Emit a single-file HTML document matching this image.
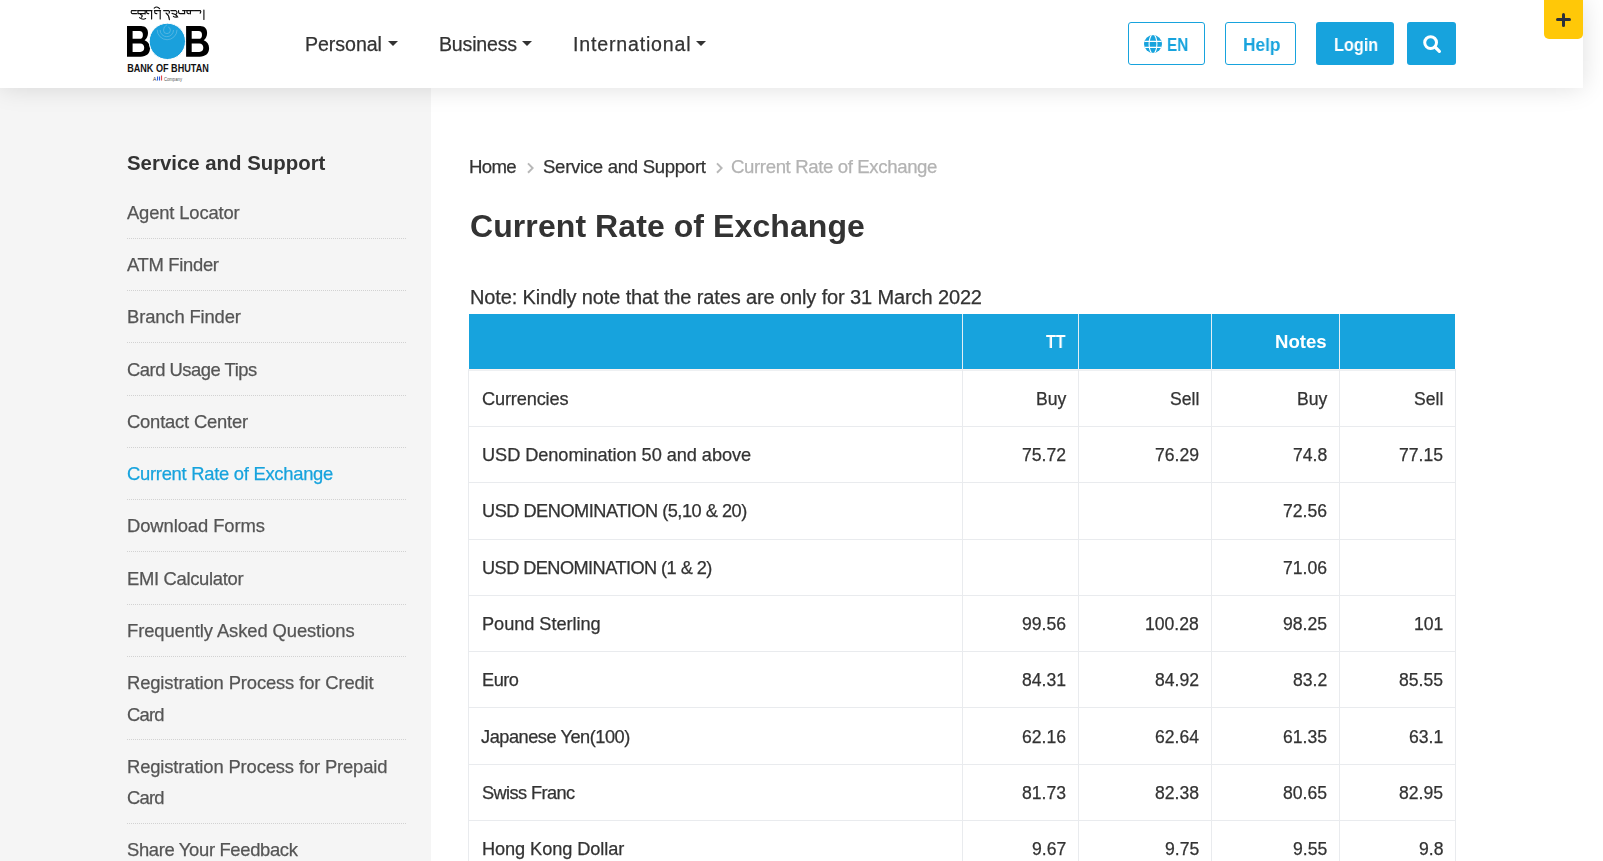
<!DOCTYPE html>
<html><head><meta charset="utf-8"><title>Current Rate of Exchange</title>
<style>
html,body{margin:0;padding:0;}
body{width:1603px;height:861px;overflow:hidden;position:relative;background:#fff;font-family:"Liberation Sans",sans-serif;}
.t{margin:0;will-change:transform;}
.r{-webkit-text-stroke:0.25px currentColor;}
.bm{display:inline-block;width:0;height:0;vertical-align:baseline;}
#sidebar{position:absolute;left:0;top:88px;width:431px;height:773px;background:#f5f5f5;}
#header{position:absolute;left:0;top:0;width:1583px;height:88px;background:#fff;box-shadow:0 0 24px rgba(0,0,0,0.13);z-index:5;}
.logo{position:absolute;left:120px;top:0;}
.caret{position:absolute;top:41px;width:0;height:0;border-top:5.5px solid #333;border-left:5px solid transparent;border-right:5px solid transparent;}
.btn{position:absolute;top:22px;height:43px;box-sizing:border-box;border-radius:3px;}
.ob{border:1px solid #17a3dd;background:#fff;}
.fb{background:#17a3dd;}
#plus{position:absolute;left:1544px;top:0;width:39px;height:39px;background:#ffc808;border-radius:0 0 5px 5px;z-index:6;}
#plus:before{content:"";position:absolute;left:12px;top:18.2px;width:14.5px;height:3.3px;background:#2b303b;border-radius:1.6px;}
#plus:after{content:"";position:absolute;left:17.6px;top:13px;width:3.3px;height:14px;background:#2b303b;border-radius:1.6px;}
.sep{position:absolute;left:127px;width:279px;height:0;border-top:1px dotted #d2d2d2;}
#thead{position:absolute;left:469px;top:314px;width:986px;height:55px;background:#17a3dd;}
#thb{position:absolute;left:469px;top:369px;width:986px;height:2px;background:linear-gradient(#fcf3f0 50%,#eef0f2 50%);}
.hl{position:absolute;left:468px;width:988px;height:1px;background:#e9ebee;}
.vl{position:absolute;top:369px;width:1px;height:492px;background:#e9ebee;}
.vlh{position:absolute;top:314px;width:1px;height:55px;background:#e3eef4;}
</style></head>
<body>
<div id="header">
<svg class="logo" width="100" height="88" viewBox="120 0 100 88">
<path d="M131.3 11 Q130.8 14.2 133.3 13.6 H136.6 M131.6 10.6 H136.4 M137.6 10.6 H145.6 M138 10.8 V13.6 H145 M145.2 10.6 V14 M140.5 14.5 Q143.5 15.5 141.5 17.2 M139.5 17.6 Q142.5 20.2 145.6 18.6 M146.3 10.6 H152 M146.6 10.8 Q146.2 14 148.8 13.6 M151.6 10.6 V19 M154.4 10.6 H160.6 M154.7 10.8 Q154.3 14 156.9 13.6 M160.2 10.6 V19 M154.2 8.2 Q156.8 5.6 159.6 8.6 M163.6 10.6 H168.4 Q170.2 11.2 169 13.2 M166 13 Q169 15 169.4 19.6 M170.8 10.6 H175.6 Q178 12 176.2 14 M172 13.4 Q176.4 14.4 177.6 17 Q174.5 17.4 173.4 16.4 M178.6 10.6 Q178.2 14.2 180.8 13.6 H184.6 V11 M182.6 10.6 H185.4 M186.4 10.6 H193.6 M187 11 Q186.6 14 189.2 13.6 M190.4 10.6 V13.8 M194.4 10.6 H200.4 Q201.4 11.6 200.2 13.2 M203.9 10 V19.4" fill="none" stroke="#111" stroke-width="1.15" stroke-linecap="round"/>
<path fill="#000" fill-rule="evenodd" d="M127.00 26.10 H141.00 C145.60 26.10 148.00 28.90 148.00 33.00 C148.00 36.30 146.60 38.70 144.60 40.30 C148.00 41.50 150.00 44.40 150.00 48.30 C150.00 53.50 146.40 56.70 140.60 56.70 H127.00 Z M132.60 31.00 H139.40 C141.80 31.00 142.90 32.50 142.90 34.90 C142.90 37.40 141.80 38.80 139.40 38.80 H132.60 Z M132.60 43.60 H140.20 C142.90 43.60 144.20 45.30 144.20 47.80 C144.20 50.30 142.90 51.90 140.20 51.90 H132.60 Z"/>
<path fill="#000" fill-rule="evenodd" d="M186.10 26.10 H200.10 C204.70 26.10 207.10 28.90 207.10 33.00 C207.10 36.30 205.70 38.70 203.70 40.30 C207.10 41.50 209.10 44.40 209.10 48.30 C209.10 53.50 205.50 56.70 199.70 56.70 H186.10 Z M191.70 31.00 H198.50 C200.90 31.00 202.00 32.50 202.00 34.90 C202.00 37.40 200.90 38.80 198.50 38.80 H191.70 Z M191.70 43.60 H199.30 C202.00 43.60 203.30 45.30 203.30 47.80 C203.30 50.30 202.00 51.90 199.30 51.90 H191.70 Z"/>
<circle cx="167.35" cy="41.35" r="18.15" fill="#1aa0dc" stroke="#fff" stroke-width="1"/>
<g fill="none" stroke="#7fc4e6" stroke-width="0.55">
<path d="M157.2 29.8 a9.9 9.9 0 0 0 19.8 0"/><path d="M160.1 30 a6.7 6.7 0 0 0 13.4 0"/><path d="M167.2 24.6 Q163.4 26.5 163.5 30.2 a3.45 3.45 0 0 0 6.9 0 Q170.4 27.8 168.2 27"/>
</g>
<g transform="translate(0 71.6) scale(1 1.2) translate(0 -71.6)"><text x="127.2" y="71.6" font-family="Liberation Sans" font-weight="700" font-size="9.2" textLength="81.6" lengthAdjust="spacingAndGlyphs" fill="#111">BANK OF BHUTAN</text></g>
<text x="153" y="80.5" font-family="Liberation Sans" font-size="5" fill="#333">A</text>
<rect x="157" y="76.5" width="1.1" height="4" fill="#2a5bd7"/><rect x="159" y="76.5" width="1.1" height="4" fill="#2a5bd7"/><rect x="161" y="75.5" width="1.1" height="5" fill="#e04a4a"/>
<text x="164" y="80.5" font-family="Liberation Sans" font-size="4.6" fill="#555" textLength="18" lengthAdjust="spacingAndGlyphs">Company</text>
</svg>
<div class="caret" style="left:388px"></div>
<div class="caret" style="left:522px"></div>
<div class="caret" style="left:696px"></div>
<div class="btn ob" style="left:1128px;width:77px"></div>
<div class="btn ob" style="left:1225px;width:71px"></div>
<div class="btn fb" style="left:1316px;width:78px"></div>
<div class="btn fb" style="left:1407px;width:49px"></div>
<svg style="position:absolute;left:1144px;top:35px" width="18" height="18" viewBox="0 0 18 18"><defs><clipPath id="gc"><circle cx="9" cy="9" r="9"/></clipPath></defs>
<circle cx="9" cy="9" r="9" fill="#17a3dd"/>
<g clip-path="url(#gc)" stroke="#fff" stroke-width="1.1" fill="none">
<ellipse cx="9" cy="9" rx="3.9" ry="9.6"/><path d="M0 6.35 H18 M0 12.35 H18"/>
</g></svg>
<svg style="position:absolute;left:1422.5px;top:35px" width="19" height="19" viewBox="0 0 19 19">
<circle cx="7.6" cy="7.6" r="5.9" fill="none" stroke="#fff" stroke-width="3"/>
<path d="M12 12 L16.4 16.4" stroke="#fff" stroke-width="3.2" stroke-linecap="round"/></svg>
<div class="t r" id="nav1" style="position:absolute;left:305.10px;top:30.80px;font-size:19.6px;line-height:26px;white-space:nowrap;color:#333;letter-spacing:-0.052px;">Personal</div>
<div class="t r" id="nav2" style="position:absolute;left:438.70px;top:30.80px;font-size:19.6px;line-height:26px;white-space:nowrap;color:#333;letter-spacing:-0.205px;">Business</div>
<div class="t r" id="nav3" style="position:absolute;left:572.90px;top:30.80px;font-size:19.6px;line-height:26px;white-space:nowrap;color:#333;letter-spacing:0.810px;">International</div>
<div class="t" id="en" style="position:absolute;left:1167.40px;transform:scaleX(0.8334);transform-origin:0 0;top:32.61px;font-size:18.4px;line-height:24px;white-space:nowrap;color:#17a3dd;font-weight:700;">EN</div>
<div class="t" id="help" style="position:absolute;left:1242.70px;transform:scaleX(0.9405);transform-origin:0 0;top:32.61px;font-size:18.4px;line-height:24px;white-space:nowrap;color:#17a3dd;font-weight:700;">Help</div>
<div class="t" id="login" style="position:absolute;left:1333.70px;transform:scaleX(0.8828);transform-origin:0 0;top:32.70px;font-size:18.4px;line-height:24px;white-space:nowrap;color:#fff;font-weight:700;">Login</div>
</div>
<div id="plus"></div>
<div id="sidebar"></div>
<div class="sep" style="top:238px"></div>
<div class="sep" style="top:290px"></div>
<div class="sep" style="top:342px"></div>
<div class="sep" style="top:395px"></div>
<div class="sep" style="top:447px"></div>
<div class="sep" style="top:499px"></div>
<div class="sep" style="top:551px"></div>
<div class="sep" style="top:604px"></div>
<div class="sep" style="top:656px"></div>
<div class="sep" style="top:739px"></div>
<div class="sep" style="top:823px"></div>
<svg style="position:absolute;left:526px;top:162px" width="8" height="12" viewBox="0 0 8 12"><path d="M2 1.4 L6.6 6.1 L2 10.8" fill="none" stroke="#b8b8b8" stroke-width="2"/></svg>
<svg style="position:absolute;left:714.5px;top:162px" width="8" height="12" viewBox="0 0 8 12"><path d="M2 1.4 L6.6 6.1 L2 10.8" fill="none" stroke="#b8b8b8" stroke-width="2"/></svg>
<div id="thead"></div>
<div id="thb"></div>
<div class="vl" style="left:468px"></div>
<div class="vl" style="left:1455px"></div>
<div class="vl" style="left:962px"></div><div class="vlh" style="left:962px"></div>
<div class="vl" style="left:1078px"></div><div class="vlh" style="left:1078px"></div>
<div class="vl" style="left:1211px"></div><div class="vlh" style="left:1211px"></div>
<div class="vl" style="left:1339px"></div><div class="vlh" style="left:1339px"></div>
<div class="hl" style="top:426px"></div>
<div class="hl" style="top:482px"></div>
<div class="hl" style="top:539px"></div>
<div class="hl" style="top:595px"></div>
<div class="hl" style="top:651px"></div>
<div class="hl" style="top:707px"></div>
<div class="hl" style="top:764px"></div>
<div class="hl" style="top:820px"></div>
<div class="hl" style="top:876px"></div>
<div class="t" id="sbt" style="position:absolute;left:127.10px;top:149.91px;font-size:20.4px;line-height:27px;white-space:nowrap;color:#333;font-weight:700;letter-spacing:0.006px;">Service and Support</div>
<div class="t r" id="sb0" style="position:absolute;left:127.00px;top:200.86px;font-size:18.4px;line-height:24px;white-space:nowrap;color:#555;letter-spacing:-0.148px;">Agent Locator</div>
<div class="t r" id="sb1" style="position:absolute;left:127.00px;top:253.11px;font-size:18.4px;line-height:24px;white-space:nowrap;color:#555;letter-spacing:-0.305px;">ATM Finder</div>
<div class="t r" id="sb2" style="position:absolute;left:127.00px;top:305.36px;font-size:18.4px;line-height:24px;white-space:nowrap;color:#555;letter-spacing:-0.131px;">Branch Finder</div>
<div class="t r" id="sb3" style="position:absolute;left:127.00px;top:357.59px;font-size:18.4px;line-height:24px;white-space:nowrap;color:#555;letter-spacing:-0.482px;">Card Usage Tips</div>
<div class="t r" id="sb4" style="position:absolute;left:127.00px;top:409.83px;font-size:18.4px;line-height:24px;white-space:nowrap;color:#555;letter-spacing:-0.197px;">Contact Center</div>
<div class="t r" id="sb5" style="position:absolute;left:127.00px;top:462.08px;font-size:18.4px;line-height:24px;white-space:nowrap;color:#17a3dd;letter-spacing:-0.276px;">Current Rate of Exchange</div>
<div class="t r" id="sb6" style="position:absolute;left:127.00px;top:514.31px;font-size:18.4px;line-height:24px;white-space:nowrap;color:#555;letter-spacing:-0.082px;">Download Forms</div>
<div class="t r" id="sb7" style="position:absolute;left:127.00px;top:566.55px;font-size:18.4px;line-height:24px;white-space:nowrap;color:#555;letter-spacing:-0.313px;">EMI Calculator</div>
<div class="t r" id="sb8" style="position:absolute;left:127.00px;top:618.78px;font-size:18.4px;line-height:24px;white-space:nowrap;color:#555;letter-spacing:-0.097px;">Frequently Asked Questions</div>
<div class="t r" id="sb9a" style="position:absolute;left:127.00px;top:671.01px;font-size:18.4px;line-height:24px;white-space:nowrap;color:#555;letter-spacing:-0.124px;">Registration Process for Credit</div>
<div class="t r" id="sb9b" style="position:absolute;left:127.00px;top:702.91px;font-size:18.4px;line-height:24px;white-space:nowrap;color:#555;letter-spacing:-0.764px;">Card</div>
<div class="t r" id="sb10a" style="position:absolute;left:127.00px;top:755.00px;font-size:18.4px;line-height:24px;white-space:nowrap;color:#555;letter-spacing:-0.138px;">Registration Process for Prepaid</div>
<div class="t r" id="sb10b" style="position:absolute;left:127.00px;top:785.91px;font-size:18.4px;line-height:24px;white-space:nowrap;color:#555;letter-spacing:-0.764px;">Card</div>
<div class="t r" id="sb11" style="position:absolute;left:127.00px;top:837.83px;font-size:18.4px;line-height:24px;white-space:nowrap;color:#555;letter-spacing:-0.334px;">Share Your Feedback</div>
<div class="t r" id="bc1" style="position:absolute;left:469.40px;top:154.11px;font-size:18.6px;line-height:25px;white-space:nowrap;color:#333;letter-spacing:-0.642px;">Home</div>
<div class="t r" id="bc2" style="position:absolute;left:542.70px;top:154.11px;font-size:18.6px;line-height:25px;white-space:nowrap;color:#333;letter-spacing:-0.307px;">Service and Support</div>
<div class="t r" id="bc3" style="position:absolute;left:731.10px;top:154.11px;font-size:18.6px;line-height:25px;white-space:nowrap;color:#b3b3b3;letter-spacing:-0.372px;">Current Rate of Exchange</div>
<div class="t" id="h1" style="position:absolute;left:470.00px;top:204.80px;font-size:32.0px;line-height:42px;white-space:nowrap;color:#333;font-weight:700;letter-spacing:0.080px;">Current Rate of Exchange</div>
<div class="t r" id="note" style="position:absolute;left:469.50px;top:284.20px;font-size:20.0px;line-height:26px;white-space:nowrap;color:#333;letter-spacing:-0.124px;">Note: Kindly note that the rates are only for 31 March 2022</div>
<div class="t" id="th1" style="position:absolute;left:1046.30px;transform:scaleX(0.8579);transform-origin:0 0;top:329.00px;font-size:18.6px;line-height:25px;white-space:nowrap;color:#fff;font-weight:700;">TT</div>
<div class="t" id="th2" style="position:absolute;left:1275.43px;top:329.00px;font-size:18.6px;line-height:25px;white-space:nowrap;color:#fff;font-weight:700;">Notes</div>
<div class="t r" id="r0n" style="position:absolute;left:482.10px;top:386.80px;font-size:18.2px;line-height:24px;white-space:nowrap;color:#333;letter-spacing:-0.155px;">Currencies</div>
<div class="t r" id="r0c0" style="position:absolute;left:1035.68px;top:387.80px;font-size:17.6px;line-height:23px;white-space:nowrap;color:#333;">Buy</div>
<div class="t r" id="r0c1" style="position:absolute;left:1169.64px;top:387.80px;font-size:17.6px;line-height:23px;white-space:nowrap;color:#333;">Sell</div>
<div class="t r" id="r0c2" style="position:absolute;left:1296.68px;top:387.80px;font-size:17.6px;line-height:23px;white-space:nowrap;color:#333;">Buy</div>
<div class="t r" id="r0c3" style="position:absolute;left:1413.64px;top:387.80px;font-size:17.6px;line-height:23px;white-space:nowrap;color:#333;">Sell</div>
<div class="t r" id="r1n" style="position:absolute;left:482.10px;top:443.10px;font-size:18.2px;line-height:24px;white-space:nowrap;color:#333;letter-spacing:-0.066px;">USD Denomination 50 and above</div>
<div class="t r" id="r1c0" style="position:absolute;left:1021.96px;top:444.10px;font-size:17.6px;line-height:23px;white-space:nowrap;color:#333;">75.72</div>
<div class="t r" id="r1c1" style="position:absolute;left:1154.96px;top:444.10px;font-size:17.6px;line-height:23px;white-space:nowrap;color:#333;">76.29</div>
<div class="t r" id="r1c2" style="position:absolute;left:1292.75px;top:444.10px;font-size:17.6px;line-height:23px;white-space:nowrap;color:#333;">74.8</div>
<div class="t r" id="r1c3" style="position:absolute;left:1398.96px;top:444.10px;font-size:17.6px;line-height:23px;white-space:nowrap;color:#333;">77.15</div>
<div class="t r" id="r2n" style="position:absolute;left:482.10px;top:499.39px;font-size:18.2px;line-height:24px;white-space:nowrap;color:#333;letter-spacing:-0.496px;">USD DENOMINATION (5,10 &amp; 20)</div>
<div class="t r" id="r2c2" style="position:absolute;left:1282.96px;top:500.39px;font-size:17.6px;line-height:23px;white-space:nowrap;color:#333;">72.56</div>
<div class="t r" id="r3n" style="position:absolute;left:482.10px;top:555.67px;font-size:18.2px;line-height:24px;white-space:nowrap;color:#333;letter-spacing:-0.560px;">USD DENOMINATION (1 &amp; 2)</div>
<div class="t r" id="r3c2" style="position:absolute;left:1282.96px;top:556.67px;font-size:17.6px;line-height:23px;white-space:nowrap;color:#333;">71.06</div>
<div class="t r" id="r4n" style="position:absolute;left:482.10px;top:611.97px;font-size:18.2px;line-height:24px;white-space:nowrap;color:#333;letter-spacing:-0.046px;">Pound Sterling</div>
<div class="t r" id="r4c0" style="position:absolute;left:1021.96px;top:612.97px;font-size:17.6px;line-height:23px;white-space:nowrap;color:#333;">99.56</div>
<div class="t r" id="r4c1" style="position:absolute;left:1145.16px;top:612.97px;font-size:17.6px;line-height:23px;white-space:nowrap;color:#333;">100.28</div>
<div class="t r" id="r4c2" style="position:absolute;left:1282.96px;top:612.97px;font-size:17.6px;line-height:23px;white-space:nowrap;color:#333;">98.25</div>
<div class="t r" id="r4c3" style="position:absolute;left:1413.64px;top:612.97px;font-size:17.6px;line-height:23px;white-space:nowrap;color:#333;">101</div>
<div class="t r" id="r5n" style="position:absolute;left:482.10px;top:668.25px;font-size:18.2px;line-height:24px;white-space:nowrap;color:#333;letter-spacing:-0.479px;">Euro</div>
<div class="t r" id="r5c0" style="position:absolute;left:1021.96px;top:669.25px;font-size:17.6px;line-height:23px;white-space:nowrap;color:#333;">84.31</div>
<div class="t r" id="r5c1" style="position:absolute;left:1154.96px;top:669.25px;font-size:17.6px;line-height:23px;white-space:nowrap;color:#333;">84.92</div>
<div class="t r" id="r5c2" style="position:absolute;left:1292.75px;top:669.25px;font-size:17.6px;line-height:23px;white-space:nowrap;color:#333;">83.2</div>
<div class="t r" id="r5c3" style="position:absolute;left:1398.96px;top:669.25px;font-size:17.6px;line-height:23px;white-space:nowrap;color:#333;">85.55</div>
<div class="t r" id="r6n" style="position:absolute;left:480.60px;top:724.55px;font-size:18.2px;line-height:24px;white-space:nowrap;color:#333;letter-spacing:-0.467px;">Japanese Yen(100)</div>
<div class="t r" id="r6c0" style="position:absolute;left:1021.96px;top:725.55px;font-size:17.6px;line-height:23px;white-space:nowrap;color:#333;">62.16</div>
<div class="t r" id="r6c1" style="position:absolute;left:1154.96px;top:725.55px;font-size:17.6px;line-height:23px;white-space:nowrap;color:#333;">62.64</div>
<div class="t r" id="r6c2" style="position:absolute;left:1282.96px;top:725.55px;font-size:17.6px;line-height:23px;white-space:nowrap;color:#333;">61.35</div>
<div class="t r" id="r6c3" style="position:absolute;left:1408.75px;top:725.55px;font-size:17.6px;line-height:23px;white-space:nowrap;color:#333;">63.1</div>
<div class="t r" id="r7n" style="position:absolute;left:482.10px;top:780.84px;font-size:18.2px;line-height:24px;white-space:nowrap;color:#333;letter-spacing:-0.600px;">Swiss Franc</div>
<div class="t r" id="r7c0" style="position:absolute;left:1021.96px;top:781.84px;font-size:17.6px;line-height:23px;white-space:nowrap;color:#333;">81.73</div>
<div class="t r" id="r7c1" style="position:absolute;left:1154.96px;top:781.84px;font-size:17.6px;line-height:23px;white-space:nowrap;color:#333;">82.38</div>
<div class="t r" id="r7c2" style="position:absolute;left:1282.96px;top:781.84px;font-size:17.6px;line-height:23px;white-space:nowrap;color:#333;">80.65</div>
<div class="t r" id="r7c3" style="position:absolute;left:1398.96px;top:781.84px;font-size:17.6px;line-height:23px;white-space:nowrap;color:#333;">82.95</div>
<div class="t r" id="r8n" style="position:absolute;left:482.10px;top:837.12px;font-size:18.2px;line-height:24px;white-space:nowrap;color:#333;letter-spacing:-0.085px;">Hong Kong Dollar</div>
<div class="t r" id="r8c0" style="position:absolute;left:1031.75px;top:838.12px;font-size:17.6px;line-height:23px;white-space:nowrap;color:#333;">9.67</div>
<div class="t r" id="r8c1" style="position:absolute;left:1164.75px;top:838.12px;font-size:17.6px;line-height:23px;white-space:nowrap;color:#333;">9.75</div>
<div class="t r" id="r8c2" style="position:absolute;left:1292.75px;top:838.12px;font-size:17.6px;line-height:23px;white-space:nowrap;color:#333;">9.55</div>
<div class="t r" id="r8c3" style="position:absolute;left:1418.54px;top:838.12px;font-size:17.6px;line-height:23px;white-space:nowrap;color:#333;">9.8</div>
</body></html>
